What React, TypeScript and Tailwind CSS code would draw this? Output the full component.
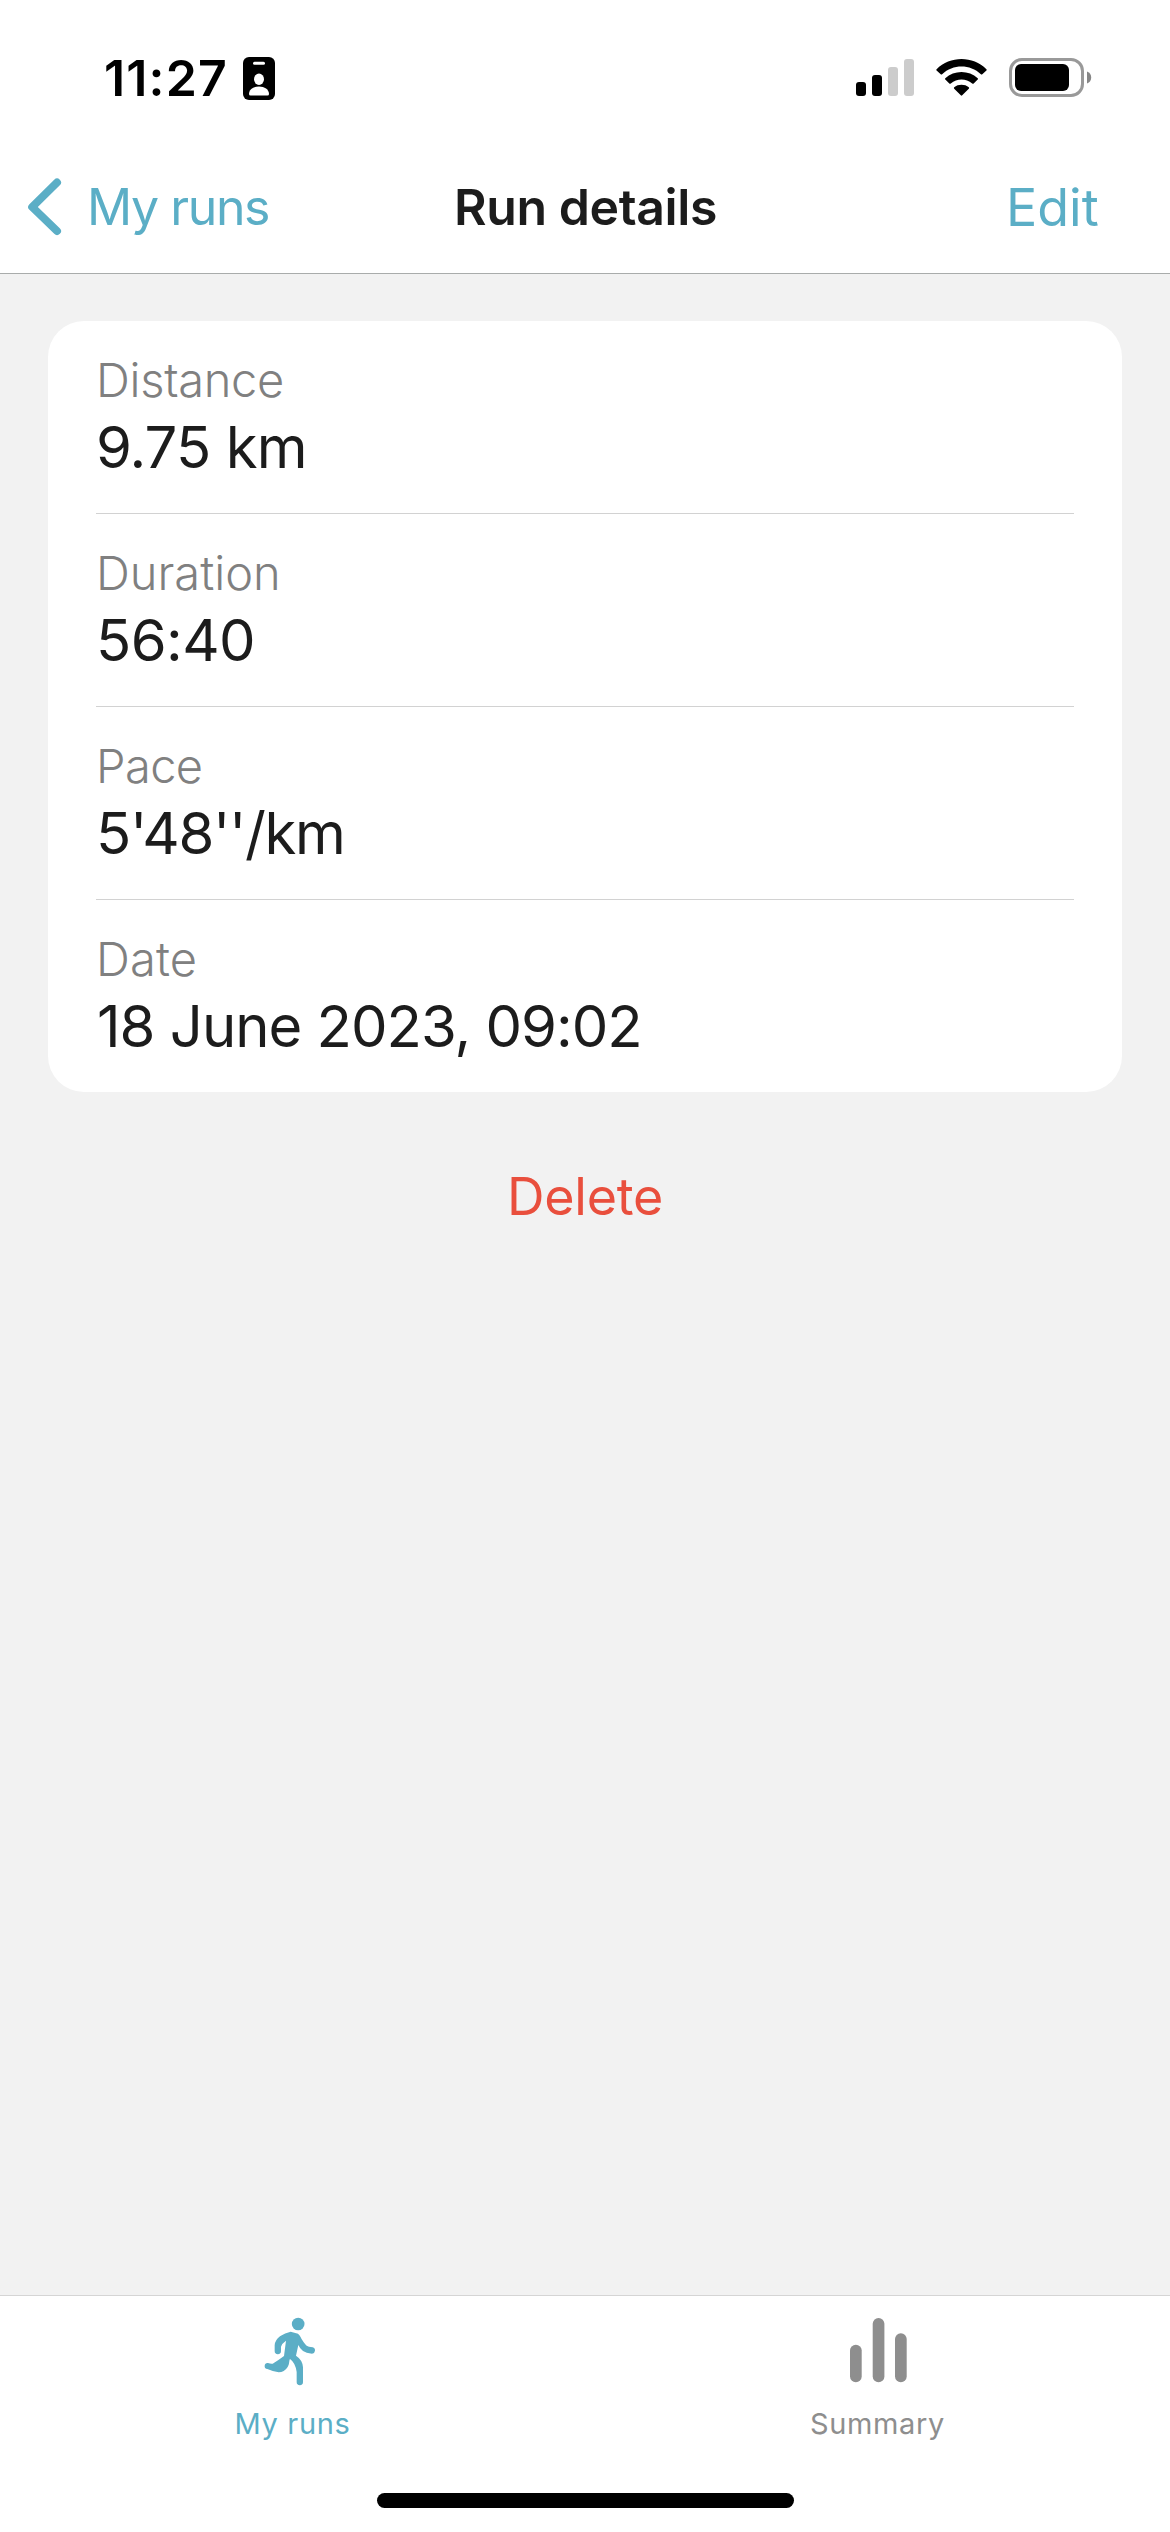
const details = [
  { label: "Distance", value: "9.75 km", labelStyle: "-tracking-[0.3px]", valueStyle: "-tracking-[0.9px]" },
  { label: "Duration", value: "56:40", labelStyle: "tracking-normal", valueStyle: "-tracking-[0.6px]" },
  { label: "Pace", value: "5'48''/km", labelStyle: "tracking-[-0.6px]", valueStyle: "tracking-[-1.35px]" },
  { label: "Date", value: "18 June 2023, 09:02", labelStyle: "tracking-[0.2px]", valueStyle: "tracking-[-1px] pl-px" },
];

function StatusBar() {
  return (
    <div className="flex h-[141px] shrink-0 items-center pt-[15px] pr-[78px] pl-[104px] text-black">
      <span className="text-[50px] leading-[60px] font-semibold tracking-[1.15px]">11:27</span>
      <svg className="ml-[15px]" width="32" height="44" viewBox="0 0 32 44">
        <rect y="1" width="32" height="43" rx="6" />
        <rect x="10" y="5.7" width="12" height="3" rx="1.5" fill="#fff" />
        <ellipse cx="16" cy="23.3" rx="5" ry="5.7" fill="#fff" />
        <path d="M6 38C6 33.2 10.5 30.4 16 30.4S26 33.2 26 38Q26 39.6 24.5 39.6H7.5Q6 39.6 6 38Z" fill="#fff" />
      </svg>
      <div className="-mt-px ml-auto flex items-center">
        <div className="flex h-[37px] items-end gap-1.5">
          <i className="h-3.5 w-2.5 rounded-[3px] bg-black" />
          <i className="h-[21px] w-2.5 rounded-[3px] bg-black" />
          <i className="h-[29px] w-2.5 rounded-[3px] bg-[#cccccc]" />
          <i className="h-[37px] w-2.5 rounded-[3px] bg-[#cccccc]" />
        </div>
        <svg className="ml-[22px]" width="51" height="37" viewBox="0 0 51 37">
          <path d="M0.6 10.2C14-3.4 37-3.4 50.4 10.2Q51 10.9 50.4 11.6L46.3 15.3Q45.6 15.9 44.9 15.3C34 5 17 5 6.1 15.3Q5.4 15.9 4.7 15.3L0.6 11.6Q0 10.9 0.6 10.2Z" />
          <path d="M9.3 19.2C18 10.9 33 10.9 41.7 19.2Q42.4 19.9 41.7 20.6L37.7 24.5Q37 25.1 36.2 24.5C30 19 21 19 14.8 24.5Q14 25.1 13.3 24.5L9.3 20.6Q8.6 19.9 9.3 19.2Z" />
          <path d="M18.2 28.3C22 25 29 25 32.8 28.3Q33.5 29 32.8 29.8L26.2 36.3Q25.5 37 24.8 36.3L18.2 29.8Q17.5 29 18.2 28.3Z" />
        </svg>
        <div className="ml-[22px] flex h-[39px] w-[75px] items-center rounded-[13px] border-3 border-[#999999] pl-[3px]">
          <div className="h-[27px] w-[54px] rounded-[6px] bg-black" />
        </div>
        <svg className="ml-[3px]" width="5" height="13" viewBox="0 0 5 13">
          <path d="M0 0.5Q4.2 2.2 4.2 6.5T0 12.5Z" fill="#868686" />
        </svg>
      </div>
    </div>
  );
}

function Header() {
  return (
    <header className="grid h-[133px] shrink-0 grid-cols-[454px_1fr_164px] items-center border-b border-[#a9acab] text-[#5baec6]">
      <button className="flex items-center gap-[25px] pl-[27px] text-[50px] leading-[60px]">
        <svg width="35" height="58" viewBox="0 0 35 58" fill="none" stroke="currentColor" strokeWidth="8" strokeLinecap="round" strokeLinejoin="round">
          <path d="M30 4.5L5.2 29L30 53" />
        </svg>
        <span className="-tracking-[1.4px]">My runs</span>
      </button>
      <h1 className="text-[50px] leading-[60px] font-semibold tracking-[-0.4px] text-[#1c1c1c]">Run details</h1>
      <button className="pt-px text-left text-[52px] leading-[62px]">Edit</button>
    </header>
  );
}

function RunnerIcon() {
  return (
    <svg width="57" height="72" viewBox="192 108 171 216" fill="currentColor">
      <circle cx="294.5" cy="132" r="19" />
      <path d="M272 155Q283 158 294 161C302 167 306 184 320 197Q325 200 338 202A9.7 9.7 0 0 1 336 221Q318 219 309 213Q299 205 295 195L288 227Q308 240 309 262L309 306A9.5 9.5 0 0 1 290 306L290 276Q286 248 270 237C267 240 269 252 263 261Q253 277 236 277Q220 275 202 267A9 9 0 0 1 204 249Q212 252 218 251Q232 243 252 228L258 182Q246 190 243 200L243 213A9.5 9.5 0 0 1 224 213L224 196Q225 180 240 169Q255 158 272 155Z" />
    </svg>
  );
}

function SummaryIcon() {
  return (
    <svg width="57" height="72" viewBox="0 0 57 72" fill="currentColor">
      <rect x="0" y="28.7" width="11.7" height="37.6" rx="5.8" />
      <rect x="22.7" y="2" width="11.7" height="64.3" rx="5.8" />
      <rect x="45" y="17.3" width="11.7" height="49" rx="5.8" />
    </svg>
  );
}

export default function App() {
  return (
    <div className="flex h-[2532px] w-[1170px] flex-col overflow-hidden bg-white font-['Inter',sans-serif]">
      <StatusBar />
      <Header />
      <main className="flex flex-1 flex-col items-stretch bg-[#f2f2f2] px-12 pt-[47px]">
        <section className="rounded-[36px] bg-white px-12">
          {details.map((item) => (
            <div key={item.label} className="h-[193px] border-b border-[#d2d2d2] pt-[31px] last:h-[192px] last:border-b-0">
              <div className="text-[47px] leading-[56px] font-light text-[#808080]">
                <span className={item.labelStyle}>{item.label}</span>
              </div>
              <div className="mt-1 text-[58px] leading-[70px] text-[#1c1c1c]">
                <span className={item.valueStyle}>{item.value}</span>
              </div>
            </div>
          ))}
        </section>
        <button className="mt-[75px] self-center text-[52px] leading-[60px] -tracking-[0.25px] text-[#e94f3d]">Delete</button>
      </main>
      <nav className="grid h-[237px] shrink-0 grid-cols-2 grid-rows-[197px_15px] border-t border-[#d5d5d5] text-[29px] leading-[36px]">
        <button className="flex flex-col items-center pt-5 text-[#5baec6]">
          <RunnerIcon />
          <span className="mt-[18px] tracking-[0.67px]">My runs</span>
        </button>
        <button className="flex flex-col items-center pt-5 text-[#8e8e8e]">
          <span className="pl-[2px]"><SummaryIcon /></span>
          <span className="mt-[18px] tracking-[0.63px]">Summary</span>
        </button>
        <div className="col-span-2 h-[15px] w-[417px] justify-self-center rounded-full bg-black" />
      </nav>
    </div>
  );
}
